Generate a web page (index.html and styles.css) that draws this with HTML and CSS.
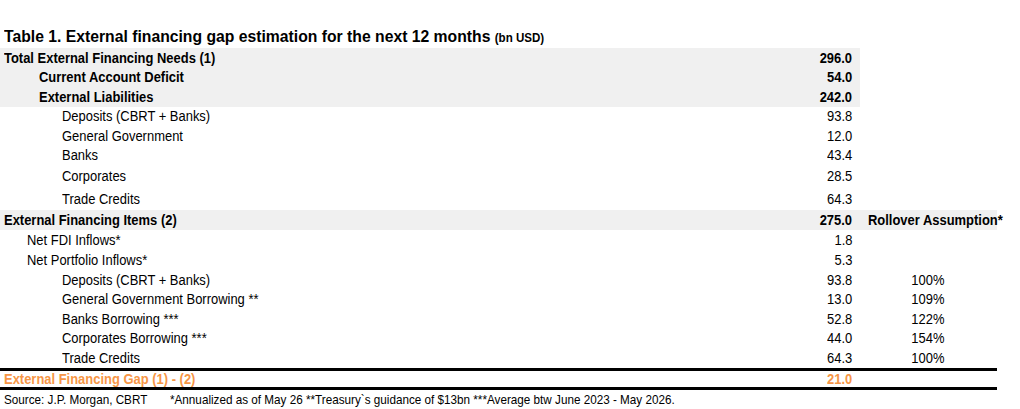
FILE: index.html
```html
<!DOCTYPE html>
<html>
<head>
<meta charset="utf-8">
<link rel="stylesheet" href="styles.css">
</head>
<body>
<div class="page">
  <h1 class="title"><span class="t">Table 1. External financing gap estimation for the next 12 months <span class="unit">(bn USD)</span></span></h1>
  <table class="fin">
    <colgroup><col class="c-label"><col class="c-val"><col class="c-roll"></colgroup>
    <tbody>
      <tr class="shade bold"><td class="l0"><span class="t">Total External Financing Needs (1)</span></td><td class="num"><span class="t">296.0</span></td><td class="blank"></td></tr>
      <tr class="shade bold"><td class="l1b"><span class="t">Current Account Deficit</span></td><td class="num"><span class="t">54.0</span></td><td class="blank"></td></tr>
      <tr class="shade bold"><td class="l1b"><span class="t">External Liabilities</span></td><td class="num"><span class="t">242.0</span></td><td class="blank"></td></tr>
      <tr><td class="l2"><span class="t">Deposits (CBRT + Banks)</span></td><td class="num"><span class="t">93.8</span></td><td></td></tr>
      <tr><td class="l2"><span class="t">General Government</span></td><td class="num"><span class="t">12.0</span></td><td></td></tr>
      <tr><td class="l2"><span class="t">Banks</span></td><td class="num"><span class="t">43.4</span></td><td></td></tr>
      <tr class="tall-a"><td class="l2"><span class="t">Corporates</span></td><td class="num"><span class="t">28.5</span></td><td></td></tr>
      <tr class="tall-b"><td class="l2"><span class="t">Trade Credits</span></td><td class="num"><span class="t">64.3</span></td><td></td></tr>
      <tr class="shade-all bold"><td class="l0"><span class="t">External Financing Items (2)</span></td><td class="num"><span class="t">275.0</span></td><td class="roll-head"><span class="t">Rollover Assumption*</span></td></tr>
      <tr class="fdi"><td class="l1"><span class="t">Net FDI Inflows*</span></td><td class="num"><span class="t">1.8</span></td><td></td></tr>
      <tr class="port"><td class="l1"><span class="t">Net Portfolio Inflows*</span></td><td class="num"><span class="t">5.3</span></td><td></td></tr>
      <tr><td class="l2"><span class="t">Deposits (CBRT + Banks)</span></td><td class="num"><span class="t">93.8</span></td><td class="pct"><span class="t">100%</span></td></tr>
      <tr><td class="l2"><span class="t">General Government Borrowing **</span></td><td class="num"><span class="t">13.0</span></td><td class="pct"><span class="t">109%</span></td></tr>
      <tr><td class="l2"><span class="t">Banks Borrowing ***</span></td><td class="num"><span class="t">52.8</span></td><td class="pct"><span class="t">122%</span></td></tr>
      <tr><td class="l2"><span class="t">Corporates Borrowing ***</span></td><td class="num"><span class="t">44.0</span></td><td class="pct"><span class="t">154%</span></td></tr>
      <tr><td class="l2"><span class="t">Trade Credits</span></td><td class="num"><span class="t">64.3</span></td><td class="pct"><span class="t">100%</span></td></tr>
      <tr class="gap bold"><td class="l0"><span class="t">External Financing Gap (1) - (2)</span></td><td class="num"><span class="t">21.0</span></td><td></td></tr>
    </tbody>
  </table>
  <div class="source">
    <span class="src"><span class="t">Source: J.P. Morgan, CBRT</span></span>
    <span class="notes"><span class="t">*Annualized as of May 26 **Treasury`s guidance of $13bn ***Average btw June 2023 - May 2026.</span></span>
  </div>
</div>
</body>
</html>
```

FILE: styles.css
```css
html, body {
  margin: 0;
  padding: 0;
  background: #ffffff;
}
body {
  font-family: "Liberation Sans", Arial, sans-serif;
  color: #000000;
}
.page {
  width: 1020px;
  padding-top: 26px;
}
.t {
  display: inline-block;
  transform: scaleX(0.925);
  transform-origin: left center;
}
.title {
  margin: 0;
  padding-left: 4px;
  height: 22px;
  line-height: 22px;
  font-size: 17px;
  font-weight: bold;
  white-space: nowrap;
}
.unit {
  font-size: 12.5px;
}
.fin {
  border-collapse: collapse;
  table-layout: fixed;
  width: 997px;
  font-size: 14px;
}
.c-label { width: 790px; }
.c-val { width: 70px; }
.c-roll { width: 137px; }
.fin td {
  padding: 0;
  height: 19.5px;
  line-height: 16px;
  white-space: nowrap;
  overflow: hidden;
}
.fin tr.tall-a td { height: 22px; }
.fin tr.tall-b td { height: 23px; }
.fin tr.fdi td { height: 20.5px; }
.fin tr.port td { height: 20px; }
.bold td { font-weight: bold; }
.shade td { background: #f0f0f0; }
.shade td.blank { background: #ffffff; }
.shade-all td { background: #f0f0f0; }
.l0 { padding-left: 4px !important; }
.l1 { padding-left: 27px !important; }
.l1b { padding-left: 39px !important; }
.l2 { padding-left: 62px !important; }
.num {
  text-align: right;
  padding-right: 8px !important;
}
.num .t { transform-origin: right center; }
.pct {
  text-align: center;
  padding-right: 2px !important;
}
.pct .t { transform-origin: center center; }
.fin td.roll-head {
  padding-left: 8px;
  overflow: visible;
}
.gap td {
  color: #f79646;
  border-top: 3px solid #000000;
  border-bottom: 3px solid #000000;
  height: 16px;
}
.source {
  display: flex;
  font-size: 13px;
  height: 20px;
  line-height: 20px;
  padding-left: 4px;
}
.source .t { transform: scaleX(0.9); }
.src { width: 166px; flex: none; }
.notes { white-space: nowrap; }
```
